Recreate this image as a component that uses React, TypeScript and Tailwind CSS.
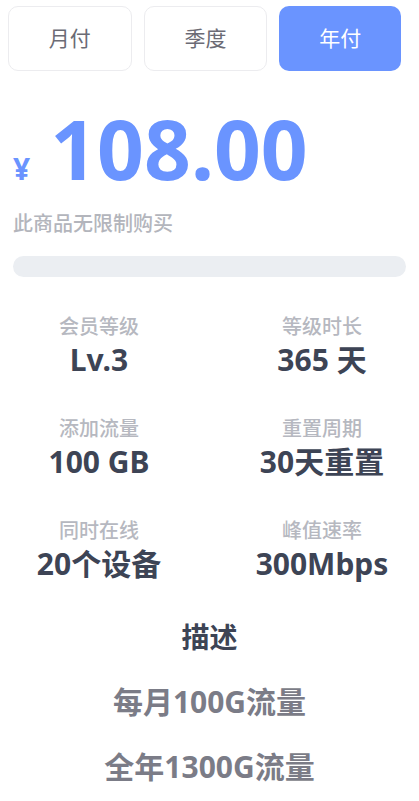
import React from "react";

const font = { fontFamily: '"Noto Sans", "Noto Sans CJK SC", sans-serif' };

const stats = [
  ["会员等级", "Lv.3"],
  ["等级时长", "365 天"],
  ["添加流量", "100 GB"],
  ["重置周期", "30天重置"],
  ["同时在线", "20个设备"],
  ["峰值速率", "300Mbps"],
];

export default function App() {
  return (
    <div className="w-[419px] h-[801px] bg-white overflow-hidden" style={font}>
      <div className="flex gap-3 pl-2 pr-[18px] pt-[6px]">
        {["月付", "季度", "年付"].map((t, i) => (
          <div
            key={t}
            className={
              i === 2
                ? "flex-1 h-[65px] rounded-[10px] bg-[#6a94ff] text-white flex items-center justify-center text-[21px]"
                : "flex-1 h-[65px] rounded-[10px] border border-[#ececef] text-[#6b6b75] flex items-center justify-center text-[21px]"
            }
          >
            {t}
          </div>
        ))}
      </div>
      <div className="flex items-baseline pl-[13px] mt-[31px] text-[#6a94ff] font-bold">
        <span className="text-[30px] leading-none">¥</span>
        <span className="text-[82px] leading-[92px] ml-[20px]">108.00</span>
      </div>
      <div className="pl-[13px] mt-[16px] text-[20px] leading-[28px] font-medium text-[#b3b5bc]">此商品无限制购买</div>
      <div className="mx-[13px] mt-[18px] h-[21px] rounded-full bg-[#ebeef2]" />
      <div className="grid grid-cols-[170px_170px] gap-x-[53px] pl-[14px] mt-[36px] gap-y-[35px]">
        {stats.map(([l, v]) => (
          <div key={l} className="flex flex-col items-center">
            <div className="text-[20px] leading-[28px] font-medium text-[#b6b8c0]">{l}</div>
            <div className="text-[30px] leading-[40px] font-bold text-[#3d4455] -mt-[1px]">{v}</div>
          </div>
        ))}
      </div>
      <div className="flex flex-col items-center mt-[33px] font-bold">
        <div className="text-[28px] leading-[40px] text-[#3d4455]">描述</div>
        <div className="text-[30px] leading-[40px] text-[#7b7c87] mt-[25px]">每月100G流量</div>
        <div className="text-[30px] leading-[40px] text-[#7b7c87] mt-[25px]">全年1300G流量</div>
      </div>
    </div>
  );
}
